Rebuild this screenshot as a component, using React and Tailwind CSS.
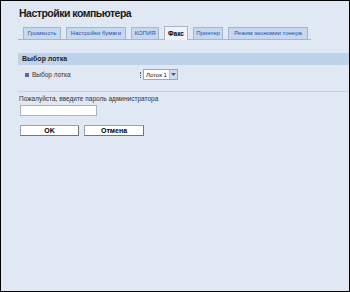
const tabs = [
	{ label: "Громкость", w: "w-[38px]" },
	{ label: "Настройки бумаги", w: "w-[60px]" },
	{ label: "КОПИЯ", w: "w-[28px]" },
	{ label: "Факс", w: "w-[24px]", active: true },
	{ label: "Принтер", w: "w-[30px]" },
	{ label: "Режим экономии тонера", w: "w-[80px]" },
];

const App = () => {
	return (
		<main className="w-[350px] h-[292px] border border-black bg-[#dfe8f3] font-['Liberation_Sans',Arial,sans-serif] text-[#222] overflow-hidden">
			{/* Title */}
			<h1 className="pl-[18px] pt-[6px] text-[10.5px] tracking-[-0.5px] font-bold leading-[13px] text-[#1a1a1a]">
				Настройки компьютера
			</h1>

			{/* Tabs */}
			<div className="ml-[17px] mt-[6px] w-[293px] h-[14px] flex items-end gap-[5px] pl-[5px] border-b border-[#a8b6c6]">
				{tabs.map((t) =>
					t.active ? (
						<div
							key={t.label}
							className={`${t.w} h-[14px] -mb-px flex items-center justify-center bg-[#eef3f9] border border-b-0 border-[#a8b6c6] text-[6.5px] font-bold text-black whitespace-nowrap`}
						>
							{t.label}
						</div>
					) : (
						<div
							key={t.label}
							className={`${t.w} h-[12px] flex items-center justify-center bg-[#c5d8ef] border border-b-0 border-[#a8b6c6] text-[6px] text-[#2c4fa8] whitespace-nowrap`}
						>
							{t.label}
						</div>
					)
				)}
			</div>

			{/* Section header */}
			<div className="ml-[17px] mt-[13px] h-[12px] bg-[#bcd3eb] flex items-center pl-[4px] text-[7px] font-bold text-[#222]">
				Выбор лотка
			</div>

			{/* Tray row */}
			<div className="ml-[17px] mt-[2px] h-[15px] flex items-center">
				<div className="w-[122px] flex items-center gap-[3px] pl-[7px]">
					<span className="w-[4px] h-[4px] bg-[#5a6a9a]" />
					<span className="text-[6.5px] text-[#333]">Выбор лотка</span>
				</div>
				<div className="flex items-center gap-[2px]">
					<span className="w-px h-[6px] border-l border-dotted border-[#555]" />
					<div className="w-[35px] h-[11px] bg-white border border-[#9aa8b8] flex items-center pl-[2px] text-[6px] leading-none text-[#111] whitespace-nowrap">
						<span className="flex-1">Лоток 1</span>
						<span className="w-[8px] h-[9px] bg-[#cfdbeb] border-l border-[#b0bfd0] flex items-center justify-center">
							<svg width="5" height="3" viewBox="0 0 5 3">
								<path d="M0 0 L5 0 L2.5 3 Z" fill="#3b5aa8" />
							</svg>
						</span>
					</div>
				</div>
			</div>

			{/* Divider */}
			<div className="ml-[17px] mt-[9px] h-px bg-[#c6d2df]" />

			{/* Password */}
			<p className="pl-[18px] mt-[3px] text-[6.5px] leading-[8px] text-[#333]">
				Пожалуйста, введите пароль администратора
			</p>
			<div className="ml-[19px] mt-[2px] w-[77px] h-[11px] bg-white border border-[#a8b4c2]" />

			{/* Buttons */}
			<div className="ml-[19px] mt-[9px] flex gap-[5px]">
				<button className="w-[59px] h-[11px] bg-white border border-[#9aa4b0] border-b-[#6b7480] border-r-[#6b7480] text-[7px] font-bold leading-none text-black">
					OK
				</button>
				<button className="w-[60px] h-[11px] bg-white border border-[#9aa4b0] border-b-[#6b7480] border-r-[#6b7480] text-[7px] font-bold leading-none text-black">
					Отмена
				</button>
			</div>
		</main>
	);
};

export default App;
